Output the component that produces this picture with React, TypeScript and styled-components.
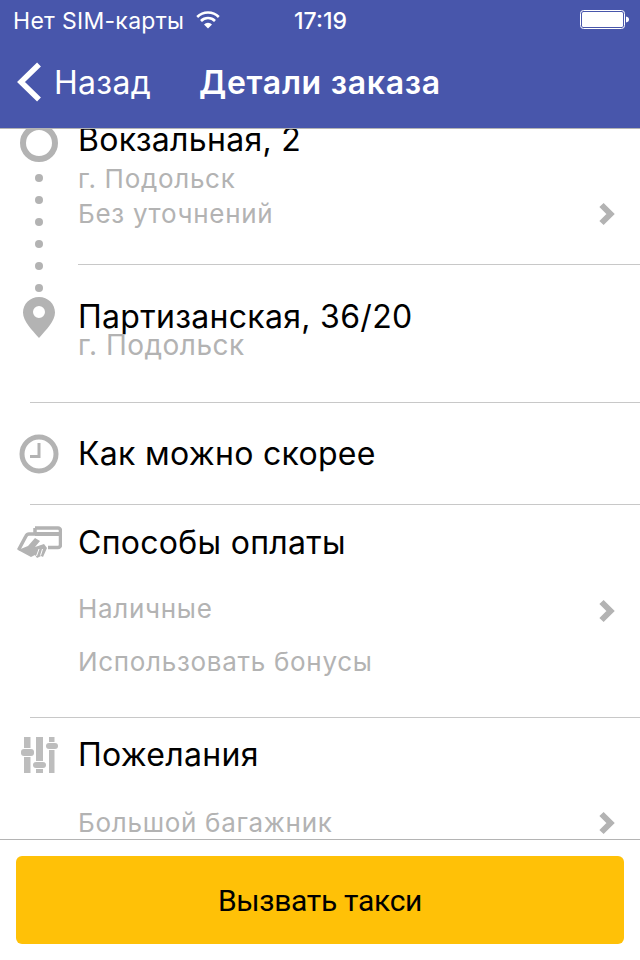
import React from 'react';
import styled, { createGlobalStyle } from 'styled-components';

const GlobalStyle = createGlobalStyle`
  html, body {
    margin: 0;
    padding: 0;
    background: #fff;
  }
  * {
    box-sizing: border-box;
  }
`;

const GREY = '#b3b3b3';

const Chevron: React.FC<{ drop?: number }> = ({ drop = 0 }) => (
  <ChevronSvg $drop={drop} width='18' height='24' viewBox='0 0 18 24'>
    <path d='M3.5 3 L12.5 12 L3.5 21' fill='none' stroke={GREY} strokeWidth='6' />
  </ChevronSvg>
);

const WifiIcon = () => (
  <svg width='24' height='18' viewBox='0 0 24 18'>
    <path d='M12 17.5 L8 13.4 A5.6 5.6 0 0 1 16 13.4 Z' fill='#fff' />
    <path d='M5 10 A9.8 9.8 0 0 1 19 10' fill='none' stroke='#fff' strokeWidth='2.6' />
    <path d='M1.2 6 A15.2 15.2 0 0 1 22.8 6' fill='none' stroke='#fff' strokeWidth='2.6' />
  </svg>
);

const BatteryIcon = () => (
  <svg width='49' height='20' viewBox='0 0 49 20'>
    <rect x='0.5' y='0.5' width='44' height='18' rx='3' fill='none' stroke='#fff' strokeWidth='1' />
    <rect x='2' y='2' width='41' height='15' rx='1.5' fill='#fff' />
    <path d='M46 6.5 C48 6.8 49 8 49 9.5 C49 11 48 12.2 46 12.5 Z' fill='#fff' />
  </svg>
);

const BackIcon = () => (
  <svg width='26' height='40' viewBox='0 0 26 40'>
    <path d='M23 2.5 L5 20 L23 37.5' fill='none' stroke='#fff' strokeWidth='5.5' />
  </svg>
);

const PinIcon = () => (
  <svg width='32' height='41' viewBox='0 0 32 41'>
    <path
      fillRule='evenodd'
      d='M16 0 C7 0 0 7 0 15.5 C0 24 9 33 16 41 C23 33 32 24 32 15.5 C32 7 25 0 16 0 Z M16 9 A6 6 0 1 1 16 21 A6 6 0 1 1 16 9 Z'
      fill={GREY}
    />
  </svg>
);

const ClockIcon = () => (
  <svg width='40' height='40' viewBox='0 0 40 40'>
    <circle cx='20' cy='20' r='17' fill='none' stroke={GREY} strokeWidth='5' />
    <path d='M20 9 V22.5 H11' fill='none' stroke={GREY} strokeWidth='3' />
  </svg>
);

const CardIcon = () => (
  <svg width='46' height='34' viewBox='0 0 46 34'>
    <path
      d='M19 2 H42 A2.5 2.5 0 0 1 44.5 4.5 V19 A2.5 2.5 0 0 1 42 21.5 H32'
      fill='none'
      stroke={GREY}
      strokeWidth='3.5'
    />
    <path d='M2.5 24 L10 10 Q11 8 13 8 H22' fill='none' stroke={GREY} strokeWidth='3.5' />
    <path d='M19 2 V8' stroke={GREY} strokeWidth='3.5' />
    <rect x='19' y='6' width='26' height='4' fill={GREY} />
    <path d='M2 24 L15 31 L19 29 L21 32 L25 30 L27 31 L31 22 L28 18 L19 21 L24 15 L19 12 L12 20 Z' fill={GREY} />
    <path d='M23 23 L20.5 30 M26.5 23 L24.5 29.5' stroke='#fff' strokeWidth='1' />
  </svg>
);

const FiltersIcon = () => (
  <svg width='37' height='36' viewBox='0 0 37 36'>
    <g fill='#bdbdbd'>
      <rect x='3' y='0' width='6.5' height='11' />
      <rect x='0' y='12' width='13' height='7' rx='3' />
      <rect x='3' y='20' width='6.5' height='16' />
      <rect x='15' y='0' width='7' height='24' />
      <rect x='12' y='25' width='13' height='6' rx='3' />
      <rect x='15' y='32' width='7' height='4' />
      <rect x='28' y='0' width='5.5' height='5' />
      <rect x='25' y='6' width='12' height='6' rx='3' />
      <rect x='28' y='13' width='5.5' height='23' />
    </g>
  </svg>
);

const App: React.FC = () => {
  return (
    <Page>
      <GlobalStyle />
      <Header>
        <StatusBar>
          <Carrier>
            Нет SIM-карты <WifiIcon />
          </Carrier>
          <Clock>17:19</Clock>
          <BatterySlot>
            <BatteryIcon />
          </BatterySlot>
        </StatusBar>
        <NavBar>
          <BackLink>
            <BackIcon />
            <span>Назад</span>
          </BackLink>
          <NavTitle>Детали заказа</NavTitle>
        </NavBar>
      </Header>

      <Scroller>
        <ScrollContent>
          <RouteSection>
            <RouteRail>
              <Ring />
              <Dot />
              <Dot />
              <Dot />
              <Dot />
              <Dot />
              <Dot />
              <PinSlot>
                <PinIcon />
              </PinSlot>
            </RouteRail>
            <RouteStops>
              <FromStop>
                <MainText>Вокзальная, 2</MainText>
                <FromCity>г. Подольск</FromCity>
                <LinkRow $top={3}>
                  <SubText>Без уточнений</SubText>
                  <Chevron />
                </LinkRow>
              </FromStop>
              <ToStop>
                <MainText>Партизанская, 36/20</MainText>
                <ToCity>г. Подольск</ToCity>
              </ToStop>
            </RouteStops>
          </RouteSection>

          <Section $height={102} $center>
            <IconCell>
              <ClockIcon />
            </IconCell>
            <MainText>Как можно скорее</MainText>
          </Section>

          <Section $height={213}>
            <SectionHead $top={19}>
              <IconCell>
                <CardIcon />
              </IconCell>
              <MainText>Способы оплаты</MainText>
            </SectionHead>
            <SectionBody>
              <LinkRow $top={31}>
                <SubText>Наличные</SubText>
                <Chevron drop={3} />
              </LinkRow>
              <LinkRow $top={21}>
                <SubText>Использовать бонусы</SubText>
              </LinkRow>
            </SectionBody>
          </Section>

          <Section $height={122}>
            <SectionHead $top={18}>
              <IconCell>
                <FiltersIcon />
              </IconCell>
              <MainText>Пожелания</MainText>
            </SectionHead>
            <SectionBody>
              <LinkRow $top={33}>
                <SubText>Большой багажник</SubText>
                <Chevron />
              </LinkRow>
            </SectionBody>
          </Section>
        </ScrollContent>
      </Scroller>

      <Footer>
        <CallButton>Вызвать такси</CallButton>
      </Footer>
    </Page>
  );
};

export default App;

const Page = styled.div`
  width: 640px;
  height: 960px;
  display: flex;
  flex-direction: column;
  overflow: hidden;
  background: #fff;
  font-family: 'Inter', 'Roboto', sans-serif;
`;

const Header = styled.header`
  flex: 0 0 129px;
  background: #4856ab;
  color: #fff;
  border-bottom: 1px solid #b4b4b4;
  display: flex;
  flex-direction: column;
`;

const StatusBar = styled.div`
  height: 40px;
  padding: 0 11px 0 13px;
  display: grid;
  grid-template-columns: 1fr auto 1fr;
  align-items: center;
  font-size: 22px;
`;

const Carrier = styled.div`
  display: flex;
  align-items: center;
  gap: 12px;
  padding-top: 2px;
  font-size: 23px;
  letter-spacing: 0.3px;
  white-space: nowrap;
  svg {
    margin-top: -3px;
  }
`;

const Clock = styled.div`
  padding: 2px 1px 0 0;
  font-weight: 500;
  font-size: 23px;
`;

const BatterySlot = styled.div`
  display: flex;
  justify-content: flex-end;
`;

const NavBar = styled.div`
  flex: 1;
  display: flex;
  align-items: center;
  padding: 0 0 4px 16px;
`;

const BackLink = styled.div`
  display: flex;
  align-items: center;
  gap: 12px;
  font-size: 32px;
  letter-spacing: 0.3px;
  width: 183px;
`;

const NavTitle = styled.div`
  font-size: 32px;
  letter-spacing: 0.7px;
  font-weight: 600;
  white-space: nowrap;
`;

const Scroller = styled.main`
  flex: 1;
  min-height: 0;
  overflow: hidden;
`;

// list is scrolled a little, so the first row is cut by the header
const ScrollContent = styled.div`
  margin-top: -8px;
`;

const RouteSection = styled.section`
  display: flex;
  height: 281px;
`;

const RouteRail = styled.div`
  flex: 0 0 78px;
  display: flex;
  flex-direction: column;
  align-items: center;
`;

const Ring = styled.div`
  width: 38px;
  height: 38px;
  margin-top: 3px;
  margin-bottom: 12px;
  border: 6px solid ${GREY};
  border-radius: 50%;
  flex: none;
`;

const Dot = styled.div`
  width: 8px;
  height: 8px;
  border-radius: 50%;
  background: ${GREY};
  flex: none;
  margin-bottom: 14px;
`;

const PinSlot = styled.div`
  margin-top: -9px;
  line-height: 0;
`;

const RouteStops = styled.div`
  flex: 1;
  min-width: 0;
`;

const FromStop = styled.div`
  height: 144px;
  border-bottom: 1px solid #c8c8c8;
`;

const ToStop = styled.div`
  padding-top: 33px;
`;

const MainText = styled.div`
  font-size: 32px;
  line-height: 38px;
  letter-spacing: 0.3px;
  color: #000;
  white-space: nowrap;
`;

const SubText = styled.div`
  font-size: 26px;
  line-height: 32px;
  letter-spacing: 0.7px;
  color: ${GREY};
  white-space: nowrap;
`;

const FromCity = styled(SubText)`
  margin-top: 4px;
`;

const ToCity = styled(SubText)`
  margin-top: -7px;
  font-size: 28px;
  letter-spacing: 0.5px;
`;

const LinkRow = styled.div<{ $top: number }>`
  display: flex;
  align-items: center;
  justify-content: space-between;
  padding-right: 24px;
  height: 32px;
  margin-top: ${(props) => props.$top}px;
`;

const ChevronSvg = styled.svg<{ $drop: number }>`
  flex: none;
  margin-top: ${(props) => props.$drop}px;
`;

const Section = styled.section<{ $height: number; $center?: boolean }>`
  height: ${(props) => props.$height}px;
  margin-left: 30px;
  border-top: 1px solid #c8c8c8;
  ${(props) => props.$center && 'display: flex; align-items: center;'}
`;

const SectionHead = styled.div<{ $top: number }>`
  display: flex;
  align-items: center;
  height: ${(props) => props.$top + 38}px;
  padding-top: ${(props) => props.$top}px;
`;

const SectionBody = styled.div`
  padding-left: 48px;
`;

// icons hang out to the left of the separator line
const IconCell = styled.div`
  flex: none;
  width: 78px;
  margin-left: -30px;
  display: flex;
  align-items: center;
  justify-content: center;
`;

const Footer = styled.footer`
  flex: 0 0 121px;
  border-top: 1px solid #b4b4b4;
  padding: 16px;
`;

const CallButton = styled.button`
  width: 100%;
  height: 88px;
  border: 0;
  border-radius: 6px;
  background: #ffc107;
  color: #000;
  font-family: 'Roboto', sans-serif;
  font-size: 30px;
  letter-spacing: -0.3px;
  padding: 0;
`;
